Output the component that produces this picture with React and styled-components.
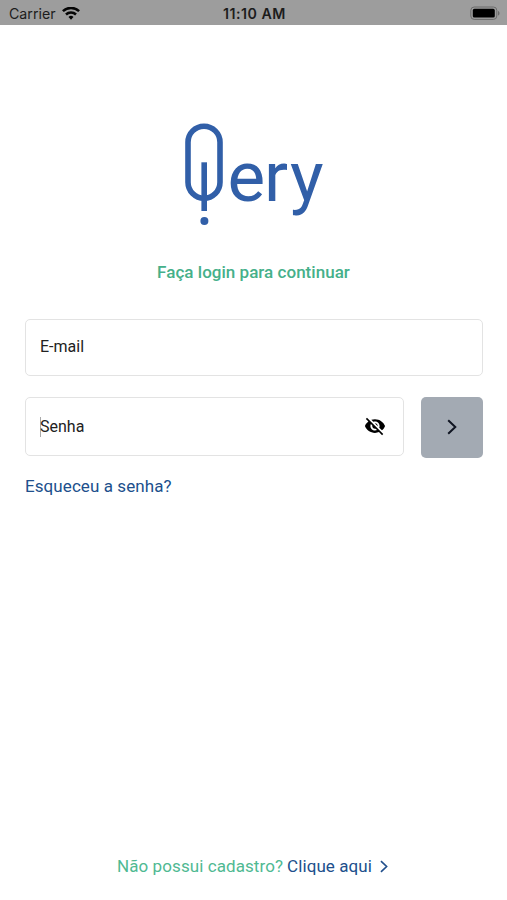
import React from "react";
import styled, { createGlobalStyle } from "styled-components";
import { MdVisibilityOff } from "react-icons/md";

const GlobalStyle = createGlobalStyle`
    * {
        box-sizing: border-box;
    }

    body {
        margin: 0;
        background-color: white;
        font-family: Roboto, "Liberation Sans", sans-serif;
    }
`

// Full height screen
const Screen = styled.div`
    display: flex;
    flex-direction: column;
    width: 507px;
    height: 900px;
    overflow: hidden;
    background-color: white;
`

const StatusBar = styled.header`
    display: grid;
    grid-template-columns: 1fr auto 1fr;
    align-items: center;
    height: 25px;
    padding: 2px 7px 0 9px;
    background-color: #9d9d9d;
    color: #1c1c1c;
    font-family: Inter, "Liberation Sans", sans-serif;
    font-size: 14.2px;
    line-height: 20px;
`

const Carrier = styled.div`
    display: flex;
    align-items: center;
    gap: 6px;
`

const Clock = styled.div`
    font-size: 14.2px;
    font-weight: 600;
    letter-spacing: 0.5px;
`

const BatteryIcon = styled.svg`
    justify-self: end;
    display: block;
`

const Content = styled.main`
    flex: 1;
    display: flex;
    flex-direction: column;
    padding: 95px 25px 0;
`

const Logo = styled.svg`
    align-self: center;
    display: block;
    color: #315fa8;
`

const LogoText = styled.text`
    fill: currentColor;
    font-family: Roboto, sans-serif;
    font-size: 71px;
`

const Title = styled.h1`
    margin: 31px 0 0;
    color: #45b08a;
    font-size: 17px;
    font-weight: 500;
    letter-spacing: 0.03px;
    line-height: 22px;
    text-align: center;
`

const Form = styled.form`
    display: grid;
    grid-template-columns: 379px 62px;
    column-gap: 17px;
    row-gap: 21px;
    align-items: start;
    margin-top: 36px;
`

const Field = styled.div`
    grid-column: ${({ $wide }) => ($wide ? "1 / -1" : "auto")};
    display: flex;
    align-items: center;
    justify-content: space-between;
    height: ${({ $height }) => $height}px;
    padding: 0 17px 2px 14px;
    border: 1px solid #e3e3e3;
    border-radius: 5px;
    color: #222;
`

const Label = styled.label`
    font-size: 16px;
    line-height: 20px;
`

// The caret sits over the first letter
const Caret = styled.span`
    display: inline-block;
    width: 1px;
    height: 20px;
    margin-right: -1px;
    vertical-align: -5px;
    background-color: #aaa;
`

const PasswordLabel = styled(Label)`
    padding-top: 2px;
`

const EyeIcon = styled(MdVisibilityOff)`
    color: #000;
`

const SubmitButton = styled.button`
    display: flex;
    align-items: center;
    justify-content: center;
    width: 62px;
    height: 61px;
    padding: 0 0 1px;
    border: none;
    border-radius: 5px;
    background-color: #a3aab3;
    color: #101522;
`

const ForgotLink = styled.a`
    align-self: flex-start;
    margin-top: 17px;
    color: #204f8c;
    font-size: 17px;
    letter-spacing: 0.08px;
    line-height: 22px;
`

const Footer = styled.footer`
    display: flex;
    align-items: center;
    justify-content: center;
    height: 22px;
    margin-bottom: 23px;
    padding-right: 2px;
    color: #4fb992;
    font-size: 17px;
    letter-spacing: 0.08px;
    line-height: 22px;
`

const FooterLink = styled.a`
    display: flex;
    align-items: center;
    gap: 8px;
    margin-left: 4px;
    color: #204f8c;
`

const Chevron = ({ width, height, stroke }) => (
    <svg width={width} height={height} viewBox="0 0 10 16" fill="none">
        <path d="M1.2 1.2 8.3 8l-7.1 6.8" stroke="currentColor" strokeWidth={stroke} />
    </svg>
);

const WifiIcon = () => (
    <svg width="18" height="14" viewBox="0 0 18 14" fill="none" stroke="#050505" strokeWidth="2.5">
        <path d="M.9 4.2a11.6 11.6 0 0 1 16.2 0" />
        <path d="M4 7.5a7.2 7.2 0 0 1 10 0" />
        <path d="M6.5 10a3.6 3.6 0 0 1 5 0L9 12.7Z" fill="#050505" stroke="none" />
    </svg>
);

export default function App() {
    return (
        <>
            <GlobalStyle />
            <Screen>
                <StatusBar>
                    <Carrier>
                        Carrier
                        <WifiIcon />
                    </Carrier>
                    <Clock>11:10 AM</Clock>
                    <BatteryIcon width="30" height="15" viewBox="0 0 30 15">
                        <rect x=".8" y="1" width="26" height="12.4" rx="3.4" fill="none" stroke="#6b6b6b" />
                        <rect x="2.8" y="2.8" width="22" height="8.8" rx="1.6" fill="#000" />
                        <path d="M28 5v4.6c2-.7 2-3.9 0-4.6Z" fill="#6b6b6b" />
                    </BatteryIcon>
                </StatusBar>
                <Content>
                    <Logo width="143" height="110" viewBox="0 0 143 110">
                        <rect x="6" y="6.2" width="32" height="72" rx="16" fill="none" stroke="currentColor" strokeWidth="5.6" />
                        <path d="M22.2 42.3V91" stroke="currentColor" strokeWidth="5.6" />
                        <circle cx="22.4" cy="101" r="4" fill="currentColor" />
                        <LogoText x="45.5 82 108" y="80.5">ery</LogoText>
                    </Logo>
                    <Title>Faça login para continuar</Title>
                    <Form>
                        <Field $wide $height={57}>
                            <Label>E-mail</Label>
                        </Field>
                        <Field $height={59}>
                            <PasswordLabel>
                                <Caret />
                                Senha
                            </PasswordLabel>
                            <EyeIcon size={22} />
                        </Field>
                        <SubmitButton type="button">
                            <Chevron width={10} height={16} stroke={2} />
                        </SubmitButton>
                    </Form>
                    <ForgotLink>Esqueceu a senha?</ForgotLink>
                </Content>
                <Footer>
                    Não possui cadastro?
                    <FooterLink>
                        Clique aqui
                        <Chevron width={8} height={13} stroke={2} />
                    </FooterLink>
                </Footer>
            </Screen>
        </>
    );
}
